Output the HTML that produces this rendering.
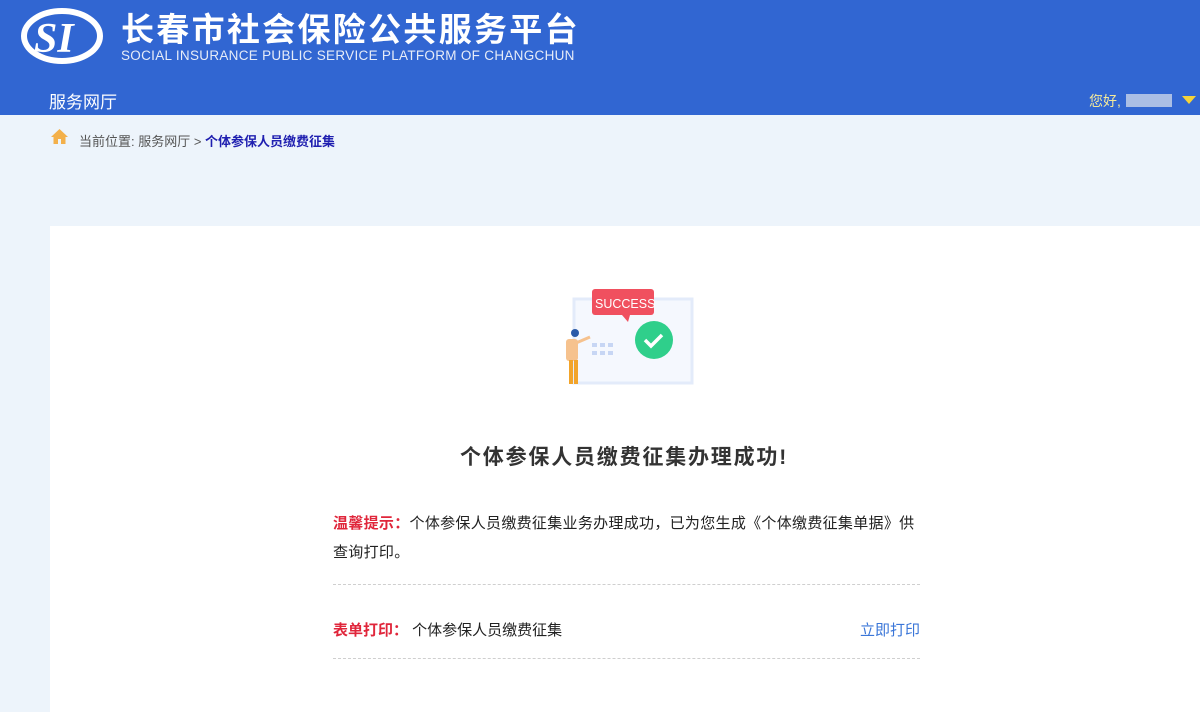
<!DOCTYPE html>
<html><head><meta charset="utf-8"><style>
*{margin:0;padding:0;box-sizing:border-box}
body{width:1200px;height:712px;overflow:hidden;background:#edf4fb;font-family:"Liberation Sans","Noto Sans CJK SC",sans-serif;position:relative}
.hd{position:absolute;left:0;top:0;width:1200px;height:115px;background:#3166d2}
.logo{position:absolute;left:21px;top:7px}
.t1{position:absolute;left:121px;top:3px;color:#fff;font-size:33px;font-weight:bold;letter-spacing:2.3px;white-space:nowrap}
.t2{position:absolute;left:121px;top:48px;color:#e6ecf8;font-size:13.5px;letter-spacing:0.3px;white-space:nowrap}
.nav{position:absolute;left:49px;top:88px;color:#fff;font-size:17px}
.usr{position:absolute;left:1089px;top:91px;color:#f5ea9a;font-size:14px}
.blur{position:absolute;left:1126px;top:94px;width:46px;height:13px;background:#c9d4ea;opacity:.8}
.tri{position:absolute;left:1182px;top:96px;width:0;height:0;border-left:7px solid transparent;border-right:7px solid transparent;border-top:8px solid #f5d33a}
.bc{position:absolute;left:79px;top:131px;font-size:13px;color:#555;white-space:nowrap}
.bc b{color:#1f1fb0}
.panel{position:absolute;left:50px;top:226px;width:1150px;height:486px;background:#fff}
.ttl{position:absolute;left:0;width:1248px;top:441px;text-align:center;font-size:21px;font-weight:bold;color:#333;letter-spacing:1.8px}
.tip{position:absolute;left:333px;top:509px;width:592px;font-size:15px;line-height:29px;color:#222;letter-spacing:0.3px}
.red{color:#e0263b;font-weight:bold}
.hr{position:absolute;left:333px;width:587px;border-top:1px dashed #cfcfcf}
.row{position:absolute;left:333px;top:619px;font-size:15px;color:#222}
.lnk{position:absolute;left:860px;top:619px;font-size:15px;color:#3a76d8}
</style></head><body>
<div class="hd">
<svg class="logo" width="82" height="58" viewBox="0 0 82 58"><ellipse cx="41" cy="29" rx="38" ry="25" fill="none" stroke="#fff" stroke-width="6"/><text x="13" y="45" fill="#fff" font-family="Liberation Serif" font-style="italic" font-weight="bold" font-size="42">SI</text></svg>
<div class="t1">长春市社会保险公共服务平台</div>
<div class="t2">SOCIAL INSURANCE PUBLIC SERVICE PLATFORM OF CHANGCHUN</div>
<div class="nav">服务网厅</div>
<div class="usr">您好,</div><div class="blur"></div><div class="tri"></div>
</div>
<svg style="position:absolute;left:50px;top:128px" width="19" height="17" viewBox="0 0 19 17"><path d="M9.5 1L1 9h2.5v7h4.5v-5h3v5h4.5V9H18z" fill="#f3b04a"/></svg>
<div class="bc">当前位置: 服务网厅 &gt; <b>个体参保人员缴费征集</b></div>
<div class="panel"></div>
<svg style="position:absolute;left:540px;top:285px" width="175" height="110" viewBox="0 0 175 110">
<rect x="34" y="14" width="118" height="84" fill="#f5f8fe" stroke="#e3ebfa" stroke-width="3"/>
<rect x="52" y="4" width="62" height="26" rx="3" fill="#f0505f"/><path d="M82 30l6 7 2-7z" fill="#f0505f"/>
<text x="55" y="23" fill="#fff" font-size="12.5" font-family="Liberation Sans">SUCCESS</text>
<circle cx="114" cy="55" r="19" fill="#2fcf8b"/><path d="M105 55l6 6 11-11" stroke="#fff" stroke-width="3.5" fill="none"/>
<g fill="#c7d6f4"><rect x="52" y="58" width="5" height="4"/><rect x="60" y="58" width="5" height="4"/><rect x="68" y="58" width="5" height="4"/><rect x="52" y="66" width="5" height="4"/><rect x="60" y="66" width="5" height="4"/><rect x="68" y="66" width="5" height="4"/></g>
<circle cx="35" cy="48" r="4" fill="#2a5aa8"/><rect x="26" y="54" width="12" height="22" rx="3" fill="#f6c28e"/><path d="M36 58l14-6" stroke="#f6c28e" stroke-width="3"/>
<rect x="29" y="75" width="4" height="24" fill="#f2a42a"/><rect x="34" y="75" width="4" height="24" fill="#f2a42a"/>
</svg>
<div class="ttl">个体参保人员缴费征集办理成功!</div>
<div class="tip"><span class="red">温馨提示：</span>个体参保人员缴费征集业务办理成功，已为您生成《个体缴费征集单据》供查询打印。</div>
<div class="hr" style="top:584px"></div>
<div class="row"><span class="red">表单打印：</span>&nbsp;个体参保人员缴费征集</div>
<div class="lnk">立即打印</div>
<div class="hr" style="top:658px"></div>
</body></html>
